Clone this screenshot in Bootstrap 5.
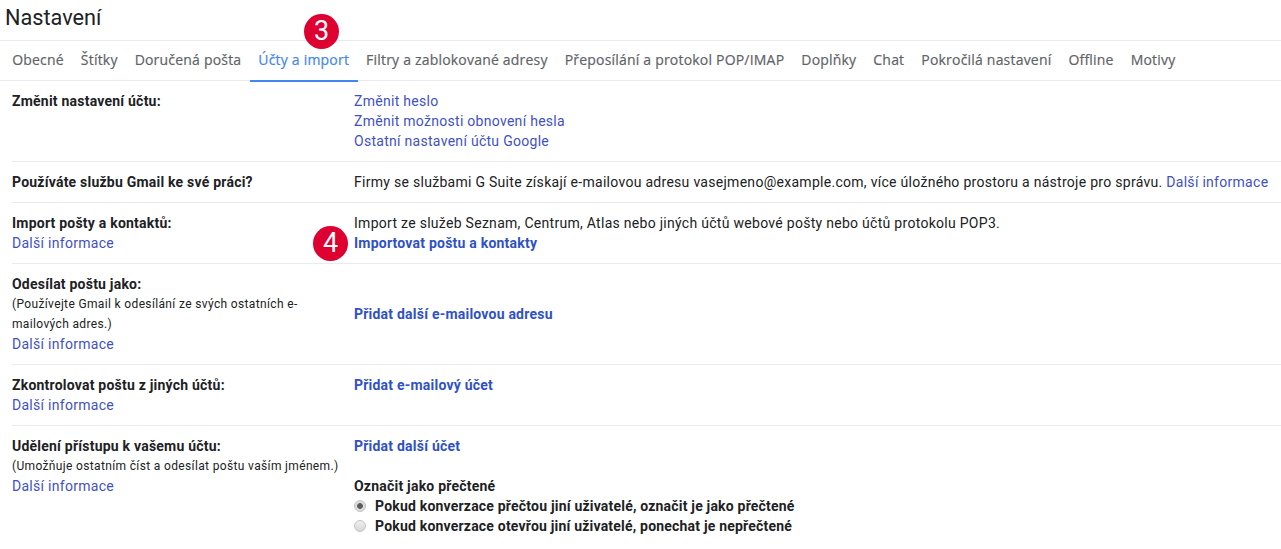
<!DOCTYPE html>
<html lang="cs"><head><meta charset="utf-8"><title>Nastavení</title>
<link href="https://cdn.jsdelivr.net/npm/bootstrap@5.3.0/dist/css/bootstrap.min.css" rel="stylesheet">
<style>
html,body{height:549px;overflow:hidden;background:#fff}
body{font:14px/20px Roboto,sans-serif;color:#202124;letter-spacing:.285px}
.pg-title{font-size:21.7px;line-height:36px;height:40px;padding-left:5px;letter-spacing:0;margin:0;font-weight:400}
.tabs{border-top:1px solid #e8eaed;border-bottom:1px solid #e8eaed;height:41px;padding-left:3.7px;margin-bottom:0;flex-wrap:nowrap}
.tabs a{display:block;height:40px;line-height:37px;padding:0 8.5px;color:#5f6368;text-decoration:none;font-family:"Open Sans",sans-serif;font-size:14px;letter-spacing:.2px;white-space:nowrap;-webkit-text-stroke:.2px #5f6368}
.tabs a.on{color:#4285f4;border-bottom:2px solid #4285f4;height:41px;-webkit-text-stroke:.2px #4285f4}
.srow{margin-left:12px;padding:10px 0;border-bottom:1px solid #e8eaed}
.srow.endrow{border-bottom:0}
.lcol{width:342px;flex:none;padding-right:30px}
.lbl{font-weight:700;letter-spacing:.22px}
.hint{font-size:12px;letter-spacing:.35px}
a.lk{color:#3f51c4;text-decoration:none;display:block}
a.lkb{color:#2f51c6;font-weight:700;letter-spacing:.22px;text-decoration:none;display:block}
.gap20{margin-bottom:20px}
.opt{font-weight:700;letter-spacing:.2px;display:flex;align-items:center;gap:9px}
.opt input{appearance:none;margin:0;width:12px;height:12px;border-radius:50%;border:1px solid #c4c4c4;background:linear-gradient(#efefef,#d8d8d8)}
.opt input:checked{background:radial-gradient(circle,#5c5c5c 0 2.5px,#dcdcdc 3.2px)}
.mk{position:absolute;width:35px;height:35px;border-radius:50%;background:#dd0031;color:#fff;font-size:27px;line-height:35px;text-align:center;letter-spacing:0}
.m3{left:304px;top:14px}.m4{left:313px;top:226px}
</style></head><body class="position-relative">
<h1 class="pg-title">Nastavení</h1>
<ul class="nav tabs">
<li class="nav-item"><a href="#">Obecné</a></li><li class="nav-item"><a href="#">Štítky</a></li><li class="nav-item"><a href="#">Doručená pošta</a></li><li class="nav-item"><a href="#" class="on">Účty a import</a></li><li class="nav-item"><a href="#">Filtry a zablokované adresy</a></li><li class="nav-item"><a href="#">Přeposílání a protokol POP/IMAP</a></li><li class="nav-item"><a href="#">Doplňky</a></li><li class="nav-item"><a href="#">Chat</a></li><li class="nav-item"><a href="#">Pokročilá nastavení</a></li><li class="nav-item"><a href="#">Offline</a></li><li class="nav-item"><a href="#">Motivy</a></li>
</ul>
<div class="srow d-flex"><div class="lcol lbl">Změnit nastavení účtu:</div><div><a class="lk" href="#">Změnit heslo</a><a class="lk" href="#">Změnit možnosti obnovení hesla</a><a class="lk" href="#">Ostatní nastavení účtu Google</a></div></div>
<div class="srow d-flex"><div class="lcol lbl">Používáte službu Gmail ke své práci?</div><div class="text-nowrap">Firmy se službami G Suite získají e-mailovou adresu vasejmeno@example.com, více úložného prostoru a nástroje pro správu. <a class="lk d-inline" href="#">Další informace</a></div></div>
<div class="srow d-flex"><div class="lcol"><div class="lbl">Import pošty a kontaktů:</div><a class="lk" href="#">Další informace</a></div><div>Import ze služeb Seznam, Centrum, Atlas nebo jiných účtů webové pošty nebo účtů protokolu POP3.<a class="lkb" href="#">Importovat poštu a kontakty</a></div></div>
<div class="srow d-flex"><div class="lcol"><div class="lbl">Odesílat poštu jako:</div><div class="hint">(Používejte Gmail k odesílání ze svých ostatních e-mailových adres.)</div><a class="lk" href="#">Další informace</a></div><div class="align-self-center"><a class="lkb" href="#">Přidat další e-mailovou adresu</a></div></div>
<div class="srow d-flex"><div class="lcol"><div class="lbl">Zkontrolovat poštu z jiných účtů:</div><a class="lk" href="#">Další informace</a></div><div><a class="lkb" href="#">Přidat e-mailový účet</a></div></div>
<div class="srow endrow d-flex"><div class="lcol pe-0"><div class="lbl">Udělení přístupu k vašemu účtu:</div><div class="hint">(Umožňuje ostatním číst a odesílat poštu vaším jménem.)</div><a class="lk" href="#">Další informace</a></div><div><a class="lkb gap20" href="#">Přidat další účet</a><div class="lbl">Označit jako přečtené</div><label class="opt"><input type="radio" name="r" checked>Pokud konverzace přečtou jiní uživatelé, označit je jako přečtené</label><label class="opt"><input type="radio" name="r">Pokud konverzace otevřou jiní uživatelé, ponechat je nepřečtené</label></div></div>
<span class="mk m3">3</span><span class="mk m4">4</span>
</body></html>
